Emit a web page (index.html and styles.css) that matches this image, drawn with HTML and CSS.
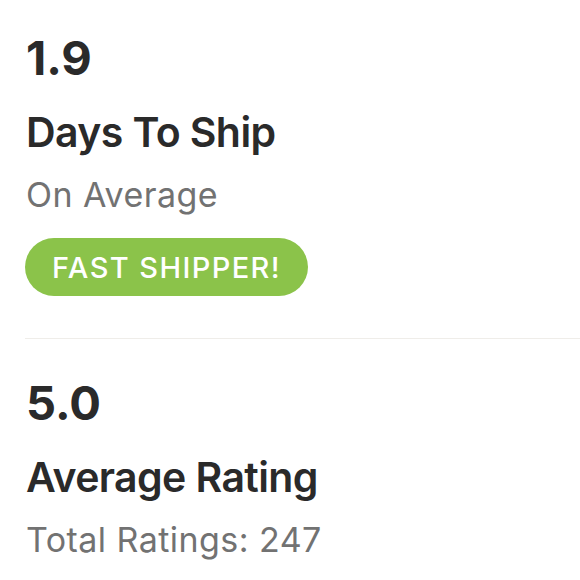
FILE: index.html
```html
<!DOCTYPE html>
<html>
<head>
<meta charset="utf-8">
<link rel="stylesheet" href="styles.css">
</head>
<body>
<div class="stats">
  <section class="stat stat-first">
    <div class="num">1.9</div>
    <div class="title">Days To Ship</div>
    <div class="sub">On Average</div>
    <div class="badge">FAST SHIPPER!</div>
  </section>
  <section class="stat stat-second">
    <div class="num">5.0</div>
    <div class="title">Average Rating</div>
    <div class="sub">Total Ratings: 247</div>
  </section>
</div>
</body>
</html>
```
FILE: styles.css
```css
html, body {
  margin: 0;
  padding: 0;
  background: #ffffff;
}
body {
  font-family: Inter, "Liberation Sans", sans-serif;
  color: #2a2a2a;
  width: 580px;
  height: 580px;
  overflow: hidden;
}
.stats {
  display: flex;
  flex-direction: column;
  padding-left: 25px;
}
.stat {
  display: flex;
  flex-direction: column;
  align-items: flex-start;
}
.stat-first {
  padding-top: 28px;
  padding-bottom: 42px;
  border-bottom: 1px solid #efede9;
}
.stat-second {
  padding-top: 34px;
}
.num {
  font-size: 47px;
  line-height: 60px;
  font-weight: 700;
  padding-left: 1px;
}
.title {
  font-size: 41px;
  line-height: 52px;
  font-weight: 600;
  letter-spacing: -0.6px;
  margin-top: 18px;
  padding-left: 1px;
}
.sub {
  font-size: 34px;
  line-height: 44px;
  font-weight: 400;
  letter-spacing: 0.45px;
  color: #727272;
  margin-top: 15px;
  padding-left: 1px;
}
.badge {
  margin-top: 21px;
  height: 58px;
  padding: 0 27px;
  border-radius: 29px;
  background: #8bc34a;
  color: #ffffff;
  font-size: 29px;
  font-weight: 500;
  letter-spacing: 1.4px;
  display: flex;
  align-items: center;
}
```
